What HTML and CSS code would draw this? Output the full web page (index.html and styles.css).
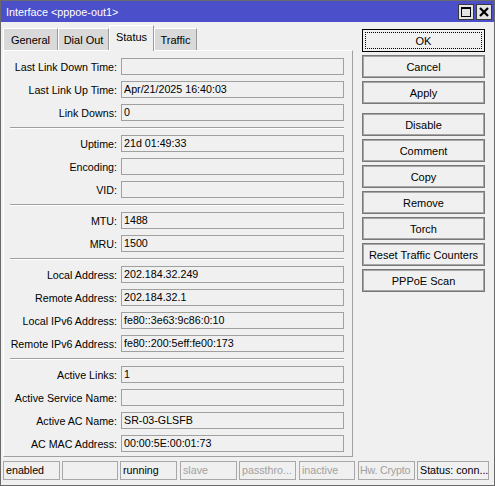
FILE: index.html
```html
<!DOCTYPE html>
<html>
<head>
<meta charset="utf-8">
<link rel="stylesheet" href="styles.css">
</head>
<body>
<div class="win">
  <div class="titlebar">
    <span class="title">Interface &lt;pppoe-out1&gt;</span>
    <div class="tbtns">
      <span class="tbtn"><svg width="14" height="14" viewBox="0 0 14 14"><rect x="2.5" y="2.5" width="9" height="9" fill="none" stroke="#000" stroke-width="1"/><rect x="2" y="2" width="10" height="2" fill="#000"/></svg></span>
      <span class="tbtn"><svg width="14" height="14" viewBox="0 0 14 14"><path d="M3 3 L11 11 M11 3 L3 11" stroke="#000" stroke-width="2.2"/></svg></span>
    </div>
  </div>
  <div class="main">
    <div class="left">
      <div class="tabs">
        <div class="tab t1">General</div>
        <div class="tab t2">Dial Out</div>
        <div class="tab active t3">Status</div>
        <div class="tab t4">Traffic</div>
      </div>
      <div class="panel">
        <div class="row"><label>Last Link Down Time:</label><div class="field"></div></div>
        <div class="row"><label>Last Link Up Time:</label><div class="field">Apr/21/2025 16:40:03</div></div>
        <div class="row"><label>Link Downs:</label><div class="field">0</div></div>
        <div class="sep"></div>
        <div class="row"><label>Uptime:</label><div class="field">21d 01:49:33</div></div>
        <div class="row"><label>Encoding:</label><div class="field"></div></div>
        <div class="row"><label>VID:</label><div class="field"></div></div>
        <div class="sep"></div>
        <div class="row"><label>MTU:</label><div class="field">1488</div></div>
        <div class="row"><label>MRU:</label><div class="field">1500</div></div>
        <div class="sep"></div>
        <div class="row"><label>Local Address:</label><div class="field">202.184.32.249</div></div>
        <div class="row"><label>Remote Address:</label><div class="field">202.184.32.1</div></div>
        <div class="row"><label>Local IPv6 Address:</label><div class="field">fe80::3e63:9c86:0:10</div></div>
        <div class="row"><label>Remote IPv6 Address:</label><div class="field">fe80::200:5eff:fe00:173</div></div>
        <div class="sep"></div>
        <div class="row"><label>Active Links:</label><div class="field">1</div></div>
        <div class="row"><label>Active Service Name:</label><div class="field"></div></div>
        <div class="row"><label>Active AC Name:</label><div class="field">SR-03-GLSFB</div></div>
        <div class="row"><label>AC MAC Address:</label><div class="field">00:00:5E:00:01:73</div></div>
      </div>
    </div>
    <div class="right">
      <div class="btn ok">OK</div>
      <div class="btn">Cancel</div>
      <div class="btn">Apply</div>
      <div class="btn gap">Disable</div>
      <div class="btn">Comment</div>
      <div class="btn">Copy</div>
      <div class="btn">Remove</div>
      <div class="btn">Torch</div>
      <div class="btn">Reset Traffic Counters</div>
      <div class="btn">PPPoE Scan</div>
    </div>
  </div>
  <div class="status">
    <div class="cell">enabled</div>
    <div class="cell"></div>
    <div class="cell">running</div>
    <div class="cell dim">slave</div>
    <div class="cell dim">passthro...</div>
    <div class="cell dim">inactive</div>
    <div class="cell dim">Hw. Crypto</div>
    <div class="cell">Status: conn...</div>
  </div>
</div>
</body>
</html>
```

FILE: styles.css
```css
html, body {
  margin: 0;
  padding: 0;
  background: #f0f0f0;
}
.win {
  width: 495px;
  height: 486px;
  box-sizing: border-box;
  border: 1px solid #6a6a6a;
  background: #f0f0f0;
  font-family: "Liberation Sans", Arial, sans-serif;
  font-size: 10.7px;
  color: #000;
  overflow: hidden;
}
.titlebar {
  height: 21px;
  background: #4b4fca;
  color: #fff;
  display: flex;
  align-items: center;
  justify-content: space-between;
  padding: 0 2px 0 5px;
}
.title {
  font-size: 10.8px;
  padding-top: 1px;
}
.tbtns {
  display: flex;
  gap: 2px;
  padding-top: 1px;
}
.tbtn {
  width: 16px;
  height: 16px;
  box-sizing: border-box;
  border: 1px solid #3a3a3a;
  background: #e4e4e4;
  display: flex;
  align-items: center;
  justify-content: center;
}
.main {
  display: flex;
  padding: 3px 0 0 2px;
}
.left {
  width: 350px;
}
.tabs {
  display: flex;
  align-items: flex-end;
  height: 25px;
}
.tab {
  height: 22px;
  box-sizing: border-box;
  background: #d9d9d9;
  border-top: 1px solid #ffffff;
  border-left: 1px solid #ffffff;
  border-right: 1px solid #9a9a9a;
  display: flex;
  align-items: center;
  justify-content: center;
  padding-top: 1px;
  font-size: 11px;
}
.t1 { width: 55px; }
.t2 { width: 51px; }
.t3 { width: 45px; }
.t4 { width: 43px; }
.tab.active {
  height: 26px;
  margin-bottom: -1px;
  background: #f0f0f0;
  position: relative;
  z-index: 1;
  padding-top: 0;
  padding-bottom: 3px;
}
.panel {
  height: 407px;
  box-sizing: border-box;
  border-top: 1px solid #ffffff;
  border-left: 1px solid #ffffff;
  border-right: 1px solid #a0a0a0;
  border-bottom: 1px solid #a0a0a0;
  padding: 7px 0 0 0;
  display: flex;
  flex-direction: column;
  gap: 6px;
}
.row {
  display: flex;
  align-items: center;
  height: 17px;
  flex-shrink: 0;
}
.row label {
  width: 113px;
  text-align: right;
  margin-right: 4px;
  white-space: nowrap;
}
.field {
  width: 223px;
  height: 17px;
  box-sizing: border-box;
  border: 1px solid #a0a0a0;
  background: #f0f0f0;
  padding-left: 2px;
  line-height: 15px;
  white-space: nowrap;
}
.sep {
  margin-left: 6px;
  width: 334px;
  height: 0;
  flex-shrink: 0;
  border-top: 1px solid #a0a0a0;
  border-bottom: 1px solid #ffffff;
}
.right {
  margin-left: 9px;
  padding-top: 4px;
  display: flex;
  flex-direction: column;
  gap: 3px;
}
.btn {
  width: 123px;
  height: 23px;
  box-sizing: border-box;
  border: 1px solid #787878;
  box-shadow: inset 0 0 0 1px #a6a6a6;
  background: #f0f0f0;
  display: flex;
  align-items: center;
  justify-content: center;
  white-space: nowrap;
  font-size: 11px;
}
.btn.gap {
  margin-top: 6px;
}
.btn.ok {
  border: 1px solid #000;
  box-shadow: none;
  position: relative;
}
.btn.ok::after {
  content: "";
  position: absolute;
  left: 2px;
  top: 2px;
  right: 2px;
  bottom: 2px;
  border: 1px dotted #000;
}
.status {
  display: flex;
  gap: 2px;
  margin: 4px 0 0 2px;
}
.cell {
  height: 19px;
  box-sizing: border-box;
  border: 1px solid #a8a8a8;
  padding-left: 2px;
  line-height: 17px;
  white-space: nowrap;
  overflow: hidden;
  width: 57px;
  font-size: 10.7px;
}
.cell:nth-child(2) { width: 56px; }
.cell:nth-child(4) { width: 57px; margin-left: 1px; }
.cell:nth-child(5) { width: 57px; }
.cell:nth-child(6) { width: 56px; margin-left: 1px; }
.cell:nth-child(7) { width: 57px; margin-left: 1px; padding-left: 1px; letter-spacing: -0.2px; }
.cell:nth-child(8) { width: 72px; }
.cell.dim {
  color: #a0a0a0;
}
```
